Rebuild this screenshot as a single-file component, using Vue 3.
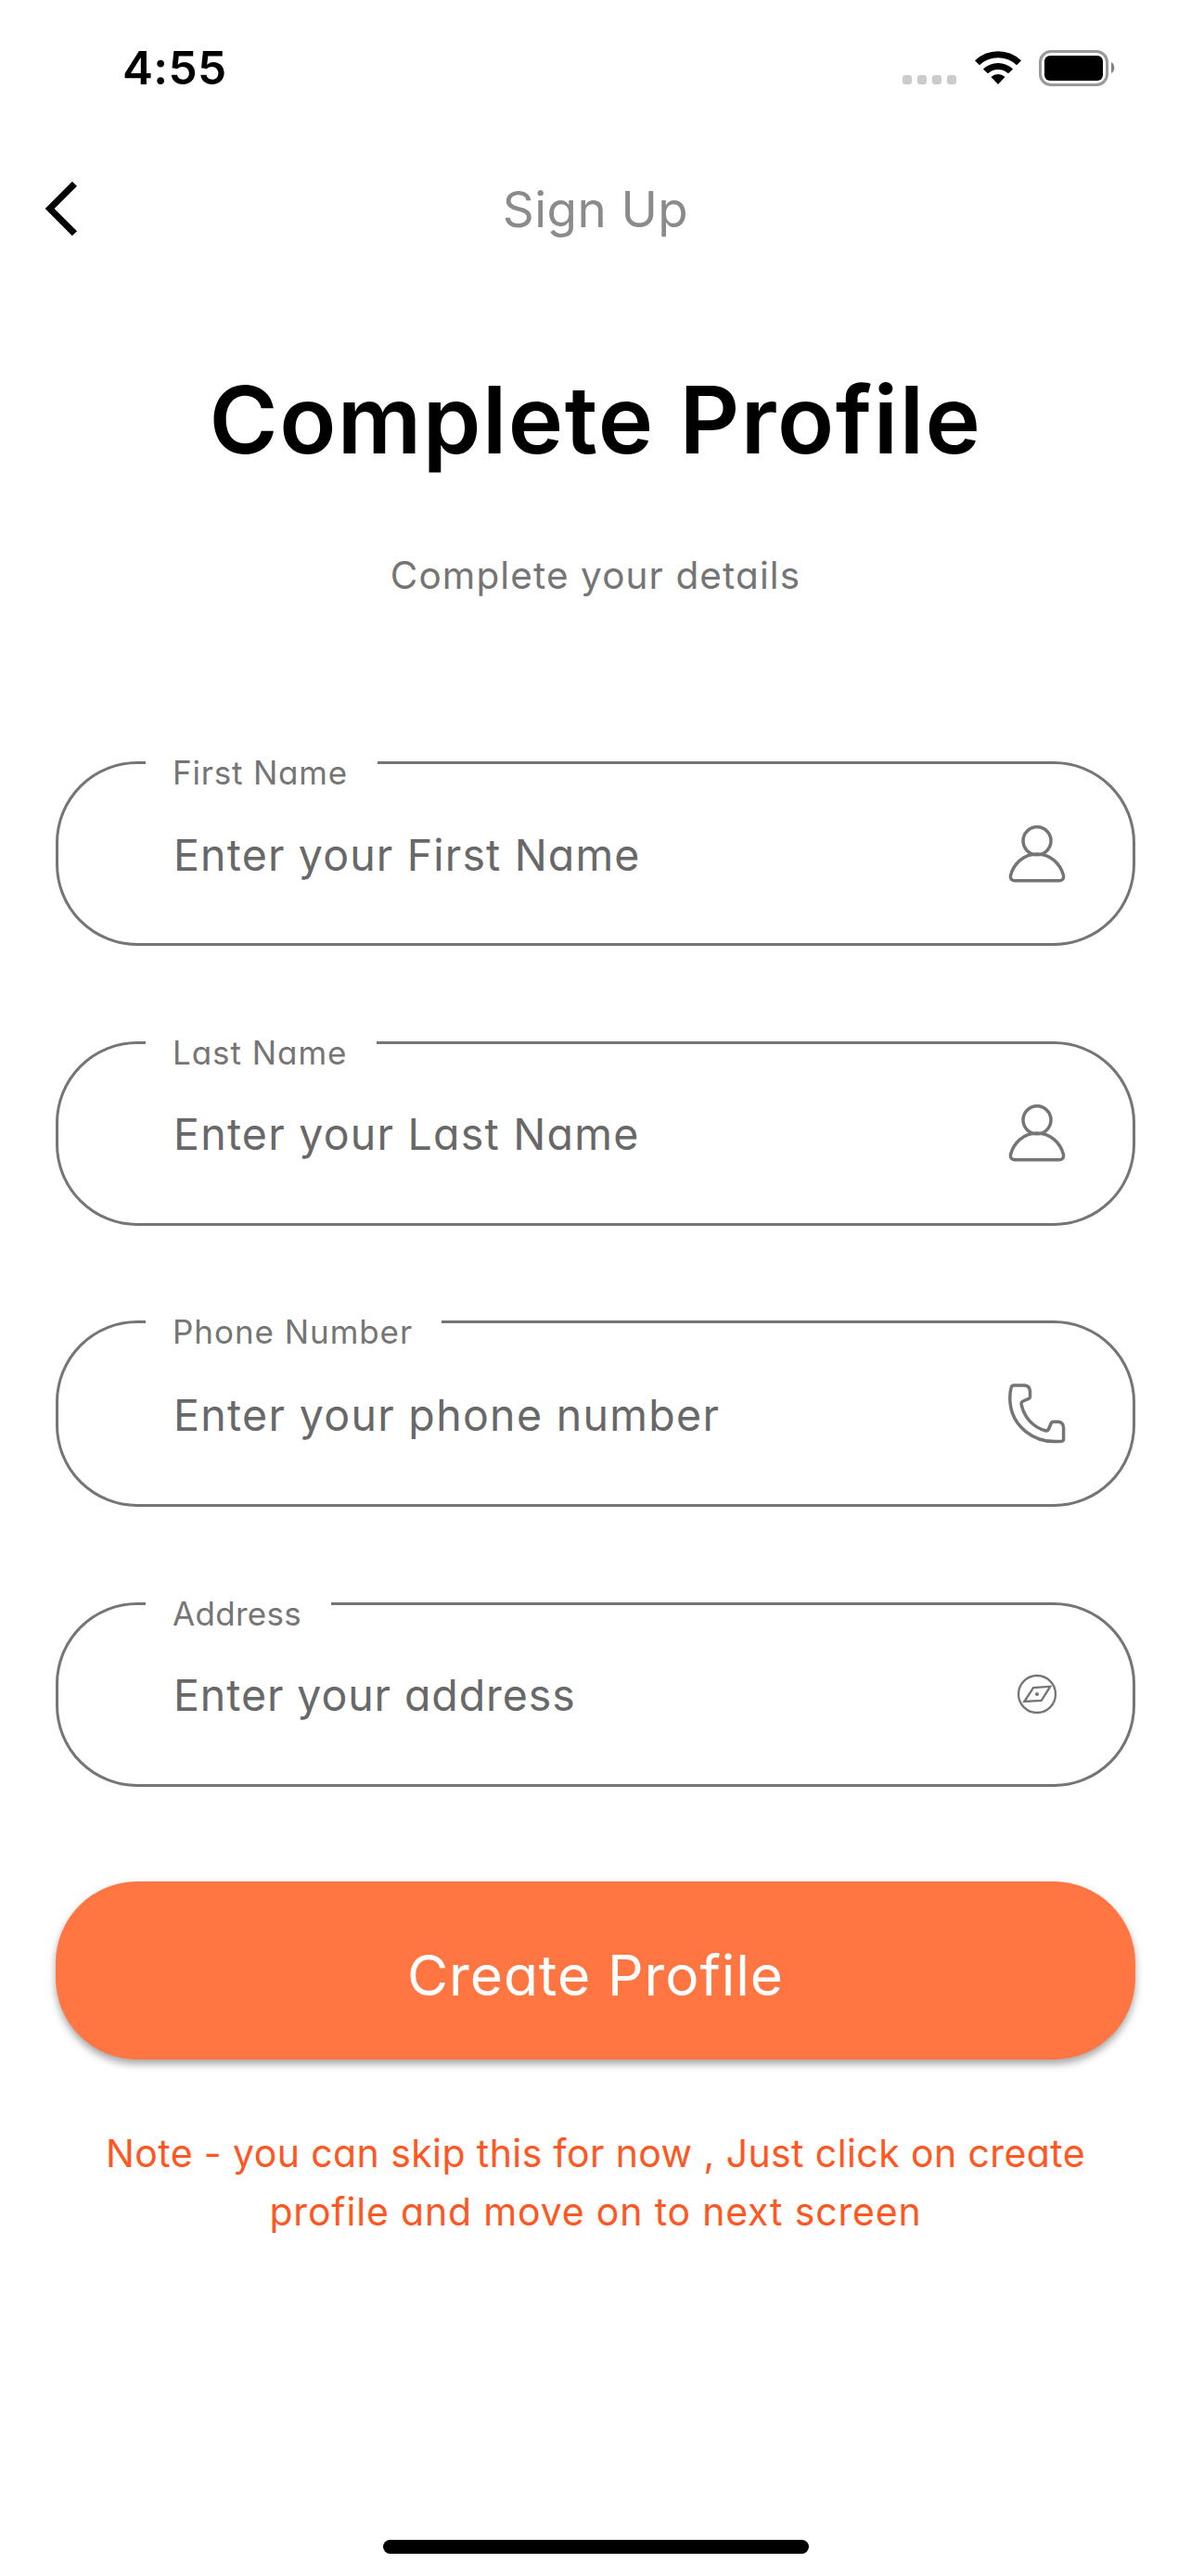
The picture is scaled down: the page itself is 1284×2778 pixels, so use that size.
<script setup>
const fields = [
  { id: 'first', label: 'First Name', hint: 'Enter your First Name', icon: 'user' },
  { id: 'last', label: 'Last Name', hint: 'Enter your Last Name', icon: 'user' },
  { id: 'phone', label: 'Phone Number', hint: 'Enter your phone number', icon: 'phone' },
  { id: 'address', label: 'Address', hint: 'Enter your address', icon: 'compass' },
]
</script>

<template>
  <div class="screen">
    <header class="status">
      <span class="time">4:55</span>
      <div class="indicators">
        <span class="dots"><i v-for="n in 4" :key="n"></i></span>
        <svg class="wifi" width="52" height="38" viewBox="0 0 52 38">
          <path d="M1 11.3A36 36 0 0 1 51 11.3L46 16.2A29 29 0 0 0 6 16.2Z" />
          <path d="M9.9 20.4A23.4 23.4 0 0 1 42.1 20.4L37 25.3A16 16 0 0 0 15 25.3Z" />
          <path d="M18.4 29A11.4 11.4 0 0 1 33.6 29L26 37Z" />
        </svg>
        <span class="battery"><i></i></span>
        <svg class="nub" width="4" height="12" viewBox="0 0 4 12"><path d="M0 0A7 7 0 0 1 0 12Z" /></svg>
      </div>
    </header>

    <nav class="nav">
      <svg class="back" width="36" height="60" viewBox="0 0 36 60">
        <path d="M29.8.7 35 5.7 10.6 30 35 54.3 29.8 59.3.7 30Z" />
      </svg>
      <span class="nav-title">Sign Up</span>
    </nav>

    <main class="content">
      <h1 class="title">Complete Profile</h1>
      <p class="subtitle">Complete your details</p>

      <form class="form" @submit.prevent>
        <div v-for="f in fields" :key="f.id" class="field" :class="f.id">
          <label class="label">{{ f.label }}</label>
          <span class="hint">{{ f.hint }}</span>
          <svg v-if="f.icon === 'user'" class="icon" width="62" height="62" viewBox="0 0 62 62">
            <circle cx="31" cy="16.8" r="15" />
            <path d="M31 31C45 31 56 41 59.5 54Q60.3 59.7 55 59.7H7Q1.7 59.7 2.5 54C6 41 17 31 31 31Z" />
          </svg>
          <svg v-else-if="f.icon === 'phone'" class="icon" width="62" height="65" viewBox="0 0 62 65">
            <path d="M6 2H17.5Q23.5 2.3 23.5 9V14.5Q23.3 16 21.5 16.7L16 19Q13.6 20.2 14.1 22.5C17 36.5 27 47.5 40 50.8Q42.6 51.4 43.6 49L46.2 42.8Q46.7 41.3 48.3 41.3H53Q59.5 41.5 59.6 48V60Q59.6 61.9 57.5 62.2C28 65.5 1.8 46 1.8 15.5Q1.8 9 3.3 4Q4 2 6 2Z" />
          </svg>
          <svg v-else class="icon thin" width="62" height="62" viewBox="0 0 62 62">
            <circle cx="31" cy="31" r="20" />
            <path d="M17.3 39 27 24.1 45.3 22.7 35.7 37.8Z" />
            <circle class="dot" cx="31" cy="31" r="2" />
          </svg>
        </div>
        <button class="submit" type="submit"><span>Create Profile</span></button>
      </form>

      <p class="note">
        Note - you can skip this for now , Just click on create
        <span class="note-end">profile and move on to next screen</span>
      </p>
    </main>

    <div class="home"></div>
  </div>
</template>

<style>
body {
  margin: 0;
  background: #fff;
}
</style>

<style scoped>
.screen {
  display: flex;
  flex-direction: column;
  box-sizing: border-box;
  width: 1284px;
  height: 2778px;
  background: #fff;
  font-family: Inter, "Noto Sans", sans-serif;
  color: #757575;
}

.status {
  display: flex;
  justify-content: space-between;
  align-items: center;
  height: 146px;
  padding: 0 82px 0 132px;
}

.time {
  font-size: 49.5px;
  font-weight: 600;
  letter-spacing: 0.4px;
  color: #000;
}

.indicators {
  display: flex;
  align-items: center;
  height: 38px;
}

.dots {
  display: flex;
  gap: 6px;
  margin: 26px 19px 0 0;
}

.dots i {
  width: 10px;
  height: 10px;
  border-radius: 3px;
  background: #cbcbcb;
}

.battery {
  box-sizing: border-box;
  width: 75px;
  height: 39px;
  margin: 0 3px 0 18px;
  padding: 3px;
  border: 3px solid #999;
  border-radius: 13px;
}

.battery i {
  display: block;
  height: 27px;
  border-radius: 6px;
  background: #000;
}

.nub {
  fill: #808080;
}

.nav {
  display: grid;
  grid-template-columns: 140px 1fr 140px;
  align-items: center;
  height: 158px;
}

.back {
  margin-left: 48px;
}

.nav-title {
  justify-self: center;
  padding-top: 2px;
  font-size: 53px;
  letter-spacing: 0.4px;
  color: #8b8b8b;
}

.content {
  flex: 1;
  padding: 0 60px;
  text-align: center;
  font-feature-settings: "cv11";
}

.title {
  margin: 89px 0 0;
  font-size: 100.5px;
  font-weight: 600;
  line-height: 120px;
  letter-spacing: 1.5px;
  color: #000;
}

.subtitle {
  margin: 83px 0 0;
  font-size: 40.5px;
  line-height: 50px;
  letter-spacing: 1.1px;
}

.form {
  display: flex;
  flex-direction: column;
  gap: 102.5px;
  margin-top: 175px;
}

.field {
  position: relative;
  display: flex;
  justify-content: space-between;
  align-items: center;
  box-sizing: border-box;
  height: 199px;
  padding: 0 72px 0 124px;
  border: 3px solid #757575;
  border-radius: 88px;
}

.label {
  position: absolute;
  top: -3px;
  left: 94px;
  padding: 0 32px 0 29px;
  background: #fff;
  font-size: 35px;
  line-height: 24px;
  letter-spacing: 0.8px;
}

.hint {
  padding-top: 2px;
  font-size: 46.5px;
  letter-spacing: 1.15px;
  color: #686868;
}

.last .label {
  letter-spacing: 0.95px;
}

.last .hint {
  letter-spacing: 1.23px;
}

.field.phone {
  height: 201px;
}

.phone .label {
  padding-right: 31px;
  letter-spacing: 0.95px;
}

.phone .hint {
  letter-spacing: 1.3px;
}

.address .label {
  letter-spacing: 0.3px;
}

.address .hint {
  letter-spacing: 0.9px;
}

.icon {
  fill: none;
  stroke: #757575;
  stroke-width: 3.5;
}

.thin {
  stroke-width: 2.3;
}

.dot {
  fill: #757575;
  stroke: none;
}

.submit {
  height: 192px;
  padding: 10px 0 0;
  border: 0;
  border-radius: 88px;
  background: #ff7643;
  box-shadow: 0 5px 8px rgba(0, 0, 0, 0.35);
  font: 400 60.5px/1 Inter, "Noto Sans", sans-serif;
  font-feature-settings: "cv11";
  letter-spacing: 0.9px;
  color: #fff;
}

.note {
  margin: 70px 0 0;
  font-size: 41px;
  line-height: 63px;
  letter-spacing: 0.4px;
  color: #ff5722;
}

.note-end {
  display: block;
  letter-spacing: 0.83px;
}

.home {
  align-self: center;
  width: 459px;
  height: 15px;
  margin-bottom: 24px;
  border-radius: 8px;
  background: #000;
}
</style>
